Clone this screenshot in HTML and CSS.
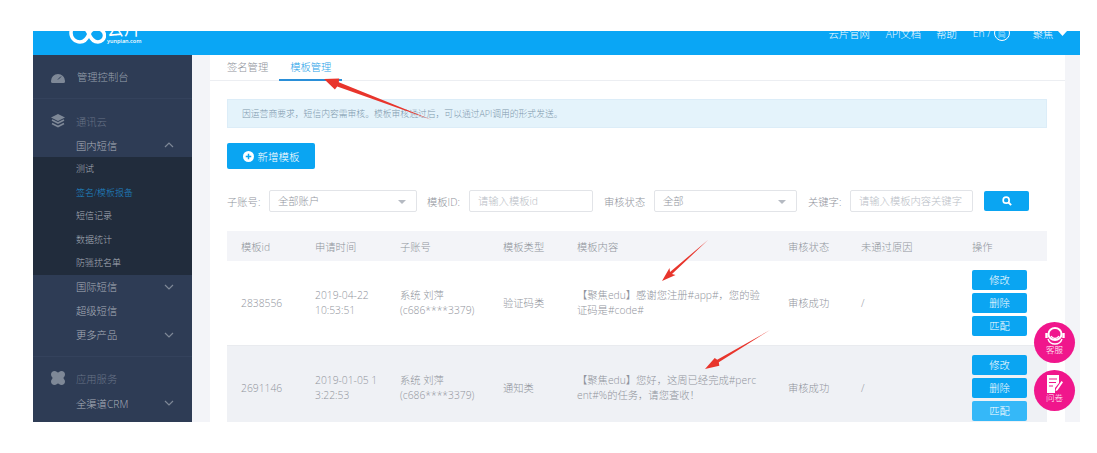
FILE: index.html
```html
<!DOCTYPE html>
<html>
<head>
    <title>云片 模板管理</title>
    <meta charset="utf-8">
    <link rel="stylesheet" href="styles.css">
</head>
<body>
    <div class="app">
        <div class="header">
            <div class="logo">
                <svg class="logo-mark" viewBox="-2 0 37 24" width="37" height="24"><path d="M18 14C15 9 13 4 9 4a9 9 0 0 0 0 18C13 22 16 19 18 14S22 9 27 9a6.500 6.500 0 0 1 0 13C23 22 20 19 18 14z" fill="none" stroke="#fff" stroke-width="3.500"/></svg>
                <div class="logo-text"><b>云片</b><span>yunpian.com</span></div>
            </div>
            <ul class="top-nav">
                <li class="w-site">云片官网</li>
                <li class="w-api">API文档</li>
                <li class="w-help">帮助</li>
                <li class="w-lang">En /<span class="lang-ring">简</span></li>
                <li class="w-user">聚焦 <svg viewBox="0 0 9 5" width="9" height="5"><path d="M0 0h9L4.500 5z" fill="#fff"/></svg></li>
            </ul>
        </div>
        <div class="main">
            <div class="sidebar">
                <div class="side-group first">
                    <div class="side-head strong">
                        <svg viewBox="0 0 14 12" width="14" height="12"><path d="M0 10a7 7 0 0 1 14 0v0.500a1.500 1.500 0 0 1-1.500 1.500h-11A1.500 1.500 0 0 1 0 10.500z" fill="#7e8897"/><path d="M7 8.500l3-3" stroke="#2e3c55" stroke-width="1"/></svg>
                        管理控制台
                    </div>
                </div>
                <div class="side-group second">
                    <div class="side-head">
                        <svg viewBox="0 0 14 14" width="14" height="14"><path d="M7 0l7 3.500L7 7 0 3.500z" fill="#7e8897"/><path d="M1 6l6 3 6-3M1 9.500l6 3 6-3" fill="none" stroke="#7e8897" stroke-width="1.600"/></svg>
                        通讯云
                    </div>
                    <div class="side-item">国内短信
                        <svg class="chev" viewBox="0 0 10 6" width="10" height="6"><path d="M1 5l4-4 4 4" fill="none" stroke="#7e8897" stroke-width="1.200"/></svg>
                    </div>
                    <ul class="side-sub">
                        <li>测试</li>
                        <li class="active">签名/模板报备</li>
                        <li>短信记录</li>
                        <li>数据统计</li>
                        <li>防骚扰名单</li>
                    </ul>
                    <div class="side-item">国际短信
                        <svg class="chev" viewBox="0 0 10 6" width="10" height="6"><path d="M1 1l4 4 4-4" fill="none" stroke="#7e8897" stroke-width="1.200"/></svg>
                    </div>
                    <div class="side-item">超级短信</div>
                    <div class="side-item">更多产品
                        <svg class="chev" viewBox="0 0 10 6" width="10" height="6"><path d="M1 1l4 4 4-4" fill="none" stroke="#7e8897" stroke-width="1.200"/></svg>
                    </div>
                </div>
                <div class="side-group third">
                    <div class="side-head">
                        <svg viewBox="0 0 14 14" width="14" height="14"><path d="M3.500 0C5.500 0 6 1.500 7 1.500S8.500 0 10.500 0C12.500 0 14 1.500 14 3.500 14 5.500 12.500 6 12.500 7s1.500 1.500 1.500 3.500c0 2-1.500 3.500-3.500 3.500C8.500 14 8 12.500 7 12.500S5.500 14 3.500 14C1.500 14 0 12.500 0 10.500 0 8.500 1.500 8 1.500 7S0 5.500 0 3.500C0 1.500 1.500 0 3.500 0z" fill="#7e8897"/></svg>
                        应用服务
                    </div>
                    <div class="side-item">全渠道CRM
                        <svg class="chev" viewBox="0 0 10 6" width="10" height="6"><path d="M1 1l4 4 4-4" fill="none" stroke="#7e8897" stroke-width="1.200"/></svg>
                    </div>
                </div>
            </div>
            <div class="content">
                <div class="tabs">
                    <div class="tab">签名管理</div>
                    <div class="tab active">模板管理</div>
                </div>
                <div class="panel">
                    <div class="alert">因运营商要求，短信内容需审核。模板审核通过后，可以通过API调用的形式发送。</div>
                    <div class="btn-add">
                        <svg viewBox="0 0 12 12" width="11" height="11"><circle cx="6" cy="6" r="6" fill="#fff"/><path d="M6 3v6M3 6h6" stroke="#0aa5f2" stroke-width="1.600"/></svg>
                        新增模板
                    </div>
                    <div class="filters">
                        <span class="label l-sub">子账号:</span>
                        <div class="select s-sub">全部账户<i class="caret"></i></div>
                        <span class="label l-id">模板ID:</span>
                        <div class="input i-id">请输入模板id</div>
                        <span class="label l-state">审核状态</span>
                        <div class="select s-state">全部<i class="caret"></i></div>
                        <span class="label l-key">关键字:</span>
                        <div class="input i-key">请输入模板内容关键字</div>
                        <div class="btn-search">
                            <svg viewBox="0 0 12 12" width="10" height="10"><circle cx="5" cy="5" r="3.600" fill="none" stroke="#fff" stroke-width="2"/><path d="M7.500 7.500L11 11" stroke="#fff" stroke-width="2.200"/></svg>
                        </div>
                    </div>
                    <table class="table">
                        <colgroup>
                            <col class="c1"><col class="c2"><col class="c3"><col class="c4">
                            <col class="c5"><col class="c6"><col class="c7"><col class="c8">
                        </colgroup>
                        <thead>
                            <tr>
                                <th>模板id</th><th>申请时间</th><th>子账号</th><th>模板类型</th>
                                <th>模板内容</th><th>审核状态</th><th>未通过原因</th><th>操作</th>
                            </tr>
                        </thead>
                        <tbody>
                            <tr class="row-one">
                                <td>2838556</td>
                                <td>2019-04-22<br>10:53:51</td>
                                <td>系统 刘萍<br>(c686****3379)</td>
                                <td>验证码类</td>
                                <td>【聚焦edu】感谢您注册#app#，您的验<br>证码是#code#</td>
                                <td>审核成功</td>
                                <td>/</td>
                                <td>
                                    <div class="ops">
                                        <div class="op">修改</div>
                                        <div class="op">删除</div>
                                        <div class="op">匹配</div>
                                    </div>
                                </td>
                            </tr>
                            <tr class="row-two">
                                <td>2691146</td>
                                <td>2019-01-05 1<br>3:22:53</td>
                                <td>系统 刘萍<br>(c686****3379)</td>
                                <td>通知类</td>
                                <td>【聚焦edu】您好，这周已经完成#perc<br>ent#%的任务，请您查收！</td>
                                <td>审核成功</td>
                                <td>/</td>
                                <td>
                                    <div class="ops">
                                        <div class="op">修改</div>
                                        <div class="op">删除</div>
                                        <div class="op light">匹配</div>
                                    </div>
                                </td>
                            </tr>
                        </tbody>
                    </table>
                </div>
            </div>
        </div>
    </div>

    <div class="float-btn kefu">
        <svg viewBox="0 0 20 18" width="20" height="18"><ellipse cx="10" cy="7" rx="6.500" ry="6" fill="none" stroke="#fff" stroke-width="2"/><path d="M1.500 6v5M18.500 6v5" stroke="#fff" stroke-width="2.400"/><path d="M3 12c1 3 4 5 7 5s6-2 7-5" fill="none" stroke="#fff" stroke-width="1.400"/><path d="M6 9c1 1.800 2.500 2.500 4 2.500s3-.7 4-2.500" fill="none" stroke="#fff" stroke-width="1.400"/></svg>
        <span>客服</span>
    </div>
    <div class="float-btn wenjuan">
        <svg viewBox="0 0 17 18" width="17" height="18"><path d="M1 0h12v8l-4 5v5H1z" fill="#fff"/><path d="M3 4h8M3 7.500h7M3 11h4" stroke="#f0168c" stroke-width="1.100"/><path d="M10 14l5.500-8 1.500 1.200-5.500 8-2 1z" fill="#fff"/></svg>
        <span>问卷</span>
    </div>

    <!-- red marks drawn over the screenshot -->
    <svg class="marks" viewBox="0 0 1097 453" width="1097" height="453">
        <polygon points="432,120 337.200,86.400 334.900,89.600 324,79 339.200,78.400 338.800,82.200" fill="#e8352c"/>
        <polygon points="708,240 672,274 675.500,275 662,281 669.500,268 670,272" fill="#e8352c"/>
        <polygon points="770,330 718.800,362.300 719.300,365.700 705,369 714.700,358 717.200,359.700" fill="#e8352c"/>
    </svg>
</body>
</html>
```

FILE: styles.css
```css
body {
    font-family: "Open Sans", "Noto Sans CJK SC", sans-serif;
    font-size: 10.3px;
    font-weight: 300;
    margin: 0;
    padding: 0;
    background-color: white;
    color: #90949c;
    width: 1097px;
    height: 453px;
    overflow: hidden;
    position: relative;
}
ul {
    list-style-type: none;
    margin: 0;
    padding: 0;
}
.app {
    margin: 31px 0 0 33px;
    width: 1047px;
    height: 391px;
    overflow: hidden;
    background-color: #f3f4f8;
}
.header {
    height: 24px;
    background-color: #0aa6f5;
    color: white;
    overflow: hidden;
    display: flex;
}
.logo {
    display: flex;
    margin: -11px 0 0 36px;
    height: 35px;
    align-items: flex-end;
    padding-bottom: 11px;
    box-sizing: border-box;
}
.logo-mark {
    display: block;
}
.logo-text {
    display: flex;
    flex-direction: column;
    margin: 0 0 -1px 1px;
}
.logo-text b {
    font-size: 17px;
    line-height: 16px;
    font-weight: 400;
}
.logo-text span {
    font-size: 5.500px;
    line-height: 8px;
    font-weight: 600;
}
.top-nav {
    display: flex;
    margin: -8px 0 0 auto;
    height: 20px;
    align-items: center;
    padding-right: 13px;
    white-space: nowrap;
}
.w-site {
    margin-right: 16px;
}
.w-api {
    margin-right: 15px;
}
.w-help {
    margin-right: 16px;
}
.w-lang {
    margin-right: 23px;
}
.lang-ring {
    display: inline-block;
    width: 16px;
    height: 16px;
    line-height: 15px;
    margin-left: 3px;
    border: 1px solid white;
    border-radius: 50%;
    text-align: center;
    font-size: 8px;
    box-sizing: border-box;
}
.w-user svg {
    margin-left: 2px;
    vertical-align: 2px;
}
.main {
    display: flex;
    height: 367px;
}
.sidebar {
    width: 159px;
    flex: none;
    background-color: #2e3c55;
    color: #a9afba;
}
.side-group {
    border-bottom: 1px solid #34425c;
}
.side-group.first {
    height: 44px;
    padding-top: 10px;
    box-sizing: border-box;
}
.side-group.first .side-head {
    height: 23px;
}
.side-group.second {
    height: 258px;
    padding-top: 10px;
    box-sizing: border-box;
}
.side-group.third {
    padding-top: 9px;
    border-bottom: none;
}
.side-head {
    height: 24px;
    display: flex;
    align-items: center;
    padding-left: 18px;
    color: #677286;
}
.side-head.strong {
    color: #9aa1ae;
}
.side-head svg {
    width: 14px;
    margin-right: 11px;
    flex: none;
}
.side-group.first .side-head svg {
    margin-right: 12px;
}
.side-item {
    height: 24px;
    display: flex;
    align-items: center;
    padding-left: 43px;
    position: relative;
}
.side-group.third .side-item {
    margin-top: 1px;
}
.chev {
    position: absolute;
    right: 18px;
    top: 9px;
}
.side-sub {
    background-color: #212c3c;
    padding: 0;
    font-size: 9px;
}
.side-sub li {
    height: 23.500px;
    line-height: 23.500px;
    padding-left: 43px;
    color: #a9afba;
}
.side-sub li.active {
    color: #1f86c6;
}
.content {
    margin-left: 18px;
    width: 855px;
    flex: none;
    background-color: white;
}
.tabs {
    display: flex;
    height: 26px;
    border-bottom: 1px solid #eceef2;
    box-sizing: border-box;
    padding-left: 6px;
}
.tab {
    padding: 0 11px;
    line-height: 24px;
    height: 26px;
    box-sizing: border-box;
}
.tab.active {
    color: #2aa3e8;
    border-bottom: 2px solid #2a8fd8;
}
.panel {
    padding: 18px 18px 0 17px;
}
.alert {
    height: 29px;
    line-height: 28px;
    background-color: #e4f3fb;
    border: 1px solid #dcedf8;
    box-sizing: border-box;
    padding-left: 14px;
    font-size: 8.800px;
    color: #7d98ad;
}
.btn-add {
    margin-top: 15px;
    width: 88px;
    height: 26px;
    border-radius: 2px;
    background-color: #0aa5f2;
    color: white;
    display: flex;
    align-items: center;
    justify-content: center;
    gap: 4px;
    font-size: 10.500px;
}
.filters {
    display: flex;
    align-items: center;
    margin-top: 21px;
    height: 22px;
    white-space: nowrap;
}
.label {
    flex: none;
}
.l-sub {
    width: 42px;
}
.l-id {
    width: 42px;
    margin-left: 10px;
}
.l-state {
    width: 50px;
    margin-left: 11px;
}
.l-key {
    width: 42px;
    margin-left: 11px;
}
.select,
.input {
    height: 22px;
    line-height: 20px;
    border: 1px solid #e2e4e8;
    border-radius: 2px;
    box-sizing: border-box;
    padding-left: 8px;
    flex: none;
    position: relative;
}
.s-sub {
    width: 148px;
}
.s-state {
    width: 143px;
}
.i-id {
    width: 124px;
    color: #b9bec6;
}
.i-key {
    width: 123px;
    color: #b9bec6;
}
.caret {
    position: absolute;
    right: 10px;
    top: 9px;
    border-left: 4px solid transparent;
    border-right: 4px solid transparent;
    border-top: 4px solid #b5bac2;
}
.btn-search {
    width: 45px;
    height: 20px;
    margin-left: 11px;
    border-radius: 2px;
    background-color: #0aa5f2;
    display: flex;
    align-items: center;
    justify-content: center;
}
.table {
    margin-top: 19px;
    width: 820px;
    table-layout: fixed;
    border-collapse: collapse;
}
.c1 { width: 74px; }
.c2 { width: 85px; }
.c3 { width: 103px; }
.c4 { width: 74px; }
.c5 { width: 211px; }
.c6 { width: 73px; }
.c7 { width: 111px; }
.c8 { width: 89px; }
.table th {
    height: 30px;
    font-weight: 300;
    text-align: left;
    padding: 0 0 0 14px;
    background-color: #f3f4f8;
}
.table td {
    padding: 0 0 0 14px;
    line-height: 15px;
    white-space: nowrap;
}
.row-one td {
    height: 84px;
    border-bottom: 1px solid #e9ebef;
}
.row-two td {
    height: 84px;
    background-color: #eff1f5;
}
.ops {
    display: flex;
    flex-direction: column;
    gap: 3px;
}
.op {
    width: 55px;
    height: 20px;
    line-height: 20px;
    border-radius: 2px;
    background-color: #0aa5f2;
    color: white;
    text-align: center;
}
.op.light {
    background-color: #35b8f8;
}
.float-btn {
    position: absolute;
    left: 1034px;
    width: 41px;
    height: 41px;
    border-radius: 50%;
    background-color: #f0168c;
    color: white;
    font-size: 8.500px;
    display: flex;
    flex-direction: column;
    align-items: center;
    padding-top: 5px;
    box-sizing: border-box;
    line-height: 10px;
}
.kefu {
    top: 322px;
}
.wenjuan {
    top: 370px;
}
.marks {
    position: absolute;
    left: 0;
    top: 0;
    pointer-events: none;
}
```
